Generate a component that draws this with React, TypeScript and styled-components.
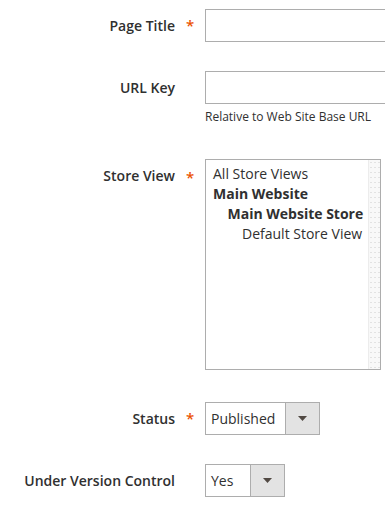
import styled, { createGlobalStyle } from 'styled-components';

const GlobalStyle = createGlobalStyle`
    html, body {
        margin: 0;
        padding: 0;
        background: #ffffff;
        overflow: hidden;
    }

    body {
        font-family: 'Open Sans', 'Liberation Sans', sans-serif;
        font-size: 14px;
        color: #303030;
    }
`;

type StoreOption = {
    label: string;
    level: number;
    bold?: boolean;
};

const storeOptions: StoreOption[] = [
    { label: 'All Store Views', level: 0 },
    { label: 'Main Website', level: 0, bold: true },
    { label: 'Main Website Store', level: 1, bold: true },
    { label: 'Default Store View', level: 2 },
];

function Caret() {
    return (
        <svg width="9" height="5" viewBox="0 0 9 5">
            <path d="M0 0 H9 L4.5 5 Z" fill="#514943" />
        </svg>
    );
}

export default function App() {
    return (
        <>
            <GlobalStyle />

            <Form>
                <Field $gap={29}>
                    <Label>Page Title</Label>
                    <Required>*</Required>
                    <Control>
                        <TextInput />
                    </Control>
                </Field>

                <Field $gap={33}>
                    <Label>URL Key</Label>
                    <Marker />
                    <Control>
                        <TextInput />
                        <Note>Relative to Web Site Base URL</Note>
                    </Control>
                </Field>

                <Field $gap={32}>
                    <Label $top={8}>Store View</Label>
                    <Required $top={8}>*</Required>
                    <Control>
                        <MultiSelect>
                            <OptionList>
                                {storeOptions.map((option) => (
                                    <OptionItem
                                        key={option.label}
                                        $level={option.level}
                                        $bold={option.bold}
                                    >
                                        {option.label}
                                    </OptionItem>
                                ))}
                            </OptionList>
                            <Track />
                        </MultiSelect>
                    </Control>
                </Field>

                <Field $gap={29}>
                    <Label>Status</Label>
                    <Required>*</Required>
                    <Control>
                        <Select $width={115}>
                            <SelectValue>Published</SelectValue>
                            <SelectButton>
                                <Caret />
                            </SelectButton>
                        </Select>
                    </Control>
                </Field>

                <Field $gap={0}>
                    <Label>Under Version Control</Label>
                    <Marker />
                    <Control>
                        <Select $width={80}>
                            <SelectValue>Yes</SelectValue>
                            <SelectButton>
                                <Caret />
                            </SelectButton>
                        </Select>
                    </Control>
                </Field>
            </Form>
        </>
    );
}

const Form = styled.div`
    display: flex;
    flex-direction: column;
    padding-top: 9px;
`;

const Field = styled.div<{ $gap: number }>`
    display: grid;
    grid-template-columns: 175px 30px 1fr;
    align-items: start;
    margin-bottom: ${(p) => p.$gap}px;
`;

const Label = styled.div<{ $top?: number }>`
    font-weight: 600;
    font-size: 14px;
    line-height: 33px;
    text-align: right;
    white-space: nowrap;
    color: #303030;
    ${(p) => (p.$top !== undefined ? `line-height: 18px; padding-top: ${p.$top}px;` : '')}
`;

const Marker = styled.div``;

const Required = styled.div<{ $top?: number }>`
    color: #eb5202;
    font-size: 15px;
    font-weight: 600;
    text-align: center;
    line-height: 33px;
    ${(p) => (p.$top !== undefined ? `line-height: 18px; padding-top: ${p.$top + 1}px;` : '')}
`;

const Control = styled.div`
    display: flex;
    flex-direction: column;
    min-width: 0;
`;

/* the text inputs run on past the right edge of the window */
const TextInput = styled.div`
    box-sizing: border-box;
    width: 100%;
    height: 33px;
    border: 1px solid #adadad;
    border-right: 0;
    background: #ffffff;
`;

const Note = styled.div`
    margin-top: 4px;
    font-size: 12px;
    line-height: 18px;
    color: #303030;
`;

const MultiSelect = styled.div`
    box-sizing: border-box;
    display: flex;
    width: 176px;
    height: 211px;
    border: 1px solid #adadad;
    background: #ffffff;
`;

const OptionList = styled.div`
    flex: 1;
    display: flex;
    flex-direction: column;
    padding: 4px 0 0 7px;
`;

const OptionItem = styled.div<{ $level: number; $bold?: boolean }>`
    font-size: 14px;
    line-height: 20px;
    white-space: nowrap;
    font-weight: ${(p) => (p.$bold ? 700 : 400)};
    padding-left: ${(p) => p.$level * 14.5}px;
    color: #303030;
`;

const Track = styled.div`
    width: 11px;
    border-left: 1px solid #ececec;
    background-color: #f8f8f8;
    background-image: radial-gradient(#e2e2e2 0.6px, transparent 0.7px);
    background-size: 4px 5px;
`;

const Select = styled.div<{ $width: number }>`
    box-sizing: border-box;
    display: flex;
    width: ${(p) => p.$width}px;
    height: 33px;
    border: 1px solid #adadad;
    background: #ffffff;
`;

const SelectValue = styled.div`
    flex: 1;
    padding-left: 5px;
    font-size: 14px;
    line-height: 31px;
    color: #303030;
`;

const SelectButton = styled.div`
    width: 33px;
    display: flex;
    align-items: center;
    justify-content: center;
    background: #e3e3e3;
    border-left: 1px solid #adadad;
`;
